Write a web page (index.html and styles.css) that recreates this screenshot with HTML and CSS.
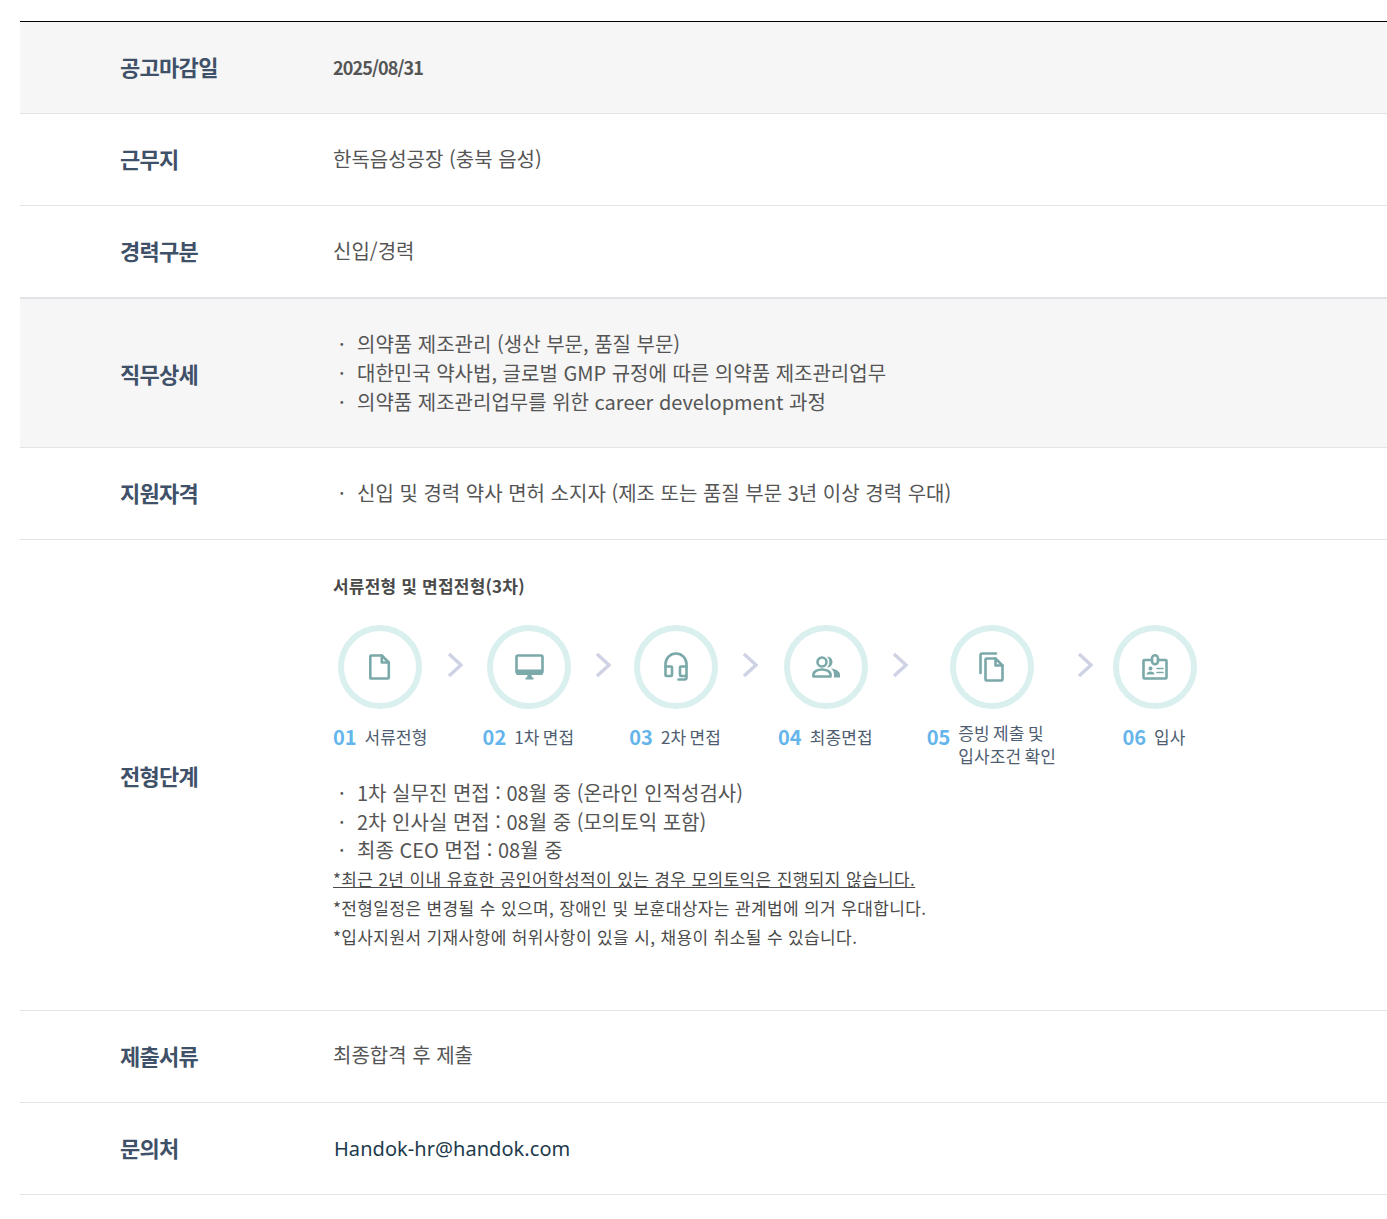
FILE: index.html
```html
<!DOCTYPE html>
<html lang="ko">
<head>
<meta charset="utf-8">
<title>채용 공고</title>
<link rel="stylesheet" href="styles.css">
</head>
<body>
<table class="job">
  <tr class="row shade"><th>공고마감일</th><td class="date">2025/08/31</td></tr>
  <tr class="row"><th>근무지</th><td>한독음성공장 (충북 음성)</td></tr>
  <tr class="row"><th>경력구분</th><td>신입/경력</td></tr>
  <tr class="row shade tall detail">
    <th>직무상세</th>
    <td>
      <ul class="dots">
        <li>의약품 제조관리 (생산 부문, 품질 부문)</li>
        <li>대한민국 약사법, 글로벌 GMP 규정에 따른 의약품 제조관리업무</li>
        <li>의약품 제조관리업무를 위한 career development 과정</li>
      </ul>
    </td>
  </tr>
  <tr class="row"><th>지원자격</th><td><ul class="dots"><li>신입 및 경력 약사 면허 소지자 (제조 또는 품질 부문 3년 이상 경력 우대)</li></ul></td></tr>
  <tr class="row tall">
    <th>전형단계</th>
    <td class="process">
      <h3 class="proc-title">서류전형 및 면접전형(3차)</h3>
      <div class="steps">
        <div class="step first">
          <div class="ring"><svg width="22" height="26" viewBox="0 0 22 26" class="ico"><path d="M2.300 1.500h10.500l7 7v15a1 1 0 0 1-1 1H2.300a1 1 0 0 1-1-1v-21a1 1 0 0 1 1-1z"/><path d="M12.800 1.500v7h7"/></svg></div>
          <div class="cap"><b>01</b><span>서류전형</span></div>
        </div>
        <svg class="arrow a1" width="16" height="26" viewBox="0 0 16 26"><path d="M2 2l12 11L2 24"/></svg>
        <div class="step">
          <div class="ring"><svg width="29" height="26" viewBox="0 0 29 26" class="ico"><rect x="1.500" y="1.500" width="26" height="17.500" rx="1.500"/><path class="fill" d="M1 15.500h27v4a1.500 1.500 0 0 1-1.500 1.500h-24A1.500 1.500 0 0 1 1 19.500zM12.500 21h4l.5 2.500h1.500v2h-8v-2H12z"/></svg></div>
          <div class="cap"><b>02</b><span>1차 면접</span></div>
        </div>
        <svg class="arrow a2" width="16" height="26" viewBox="0 0 16 26"><path d="M2 2l12 11L2 24"/></svg>
        <div class="step">
          <div class="ring"><svg width="26" height="30" viewBox="0 0 26 30" class="ico"><path d="M2.500 15v-3a10.500 10.500 0 0 1 21 0v3"/><rect x="2.500" y="14.500" width="6.500" height="9.500" rx="1"/><rect x="17" y="14.500" width="6.500" height="9.500" rx="1"/><path d="M23.500 24v1.500a2 2 0 0 1-2 2H15.500"/></svg></div>
          <div class="cap"><b>03</b><span>2차 면접</span></div>
        </div>
        <svg class="arrow a3" width="16" height="26" viewBox="0 0 16 26"><path d="M2 2l12 11L2 24"/></svg>
        <div class="step">
          <div class="ring"><svg width="28" height="22" viewBox="0 0 28 22" class="ico"><circle cx="10" cy="6" r="4.500"/><path d="M1.500 20.500v-2c0-3 4-5 8.500-5s8.500 2 8.500 5v2z"/><path class="fill" d="M15 .5a5.500 5.500 0 0 1 0 11 7.500 7.500 0 0 0 0-11z"/><path class="fill" d="M19 12.500c5 .5 9 3 9 6v3h-6v-3c0-2-1-4.500-3-6z"/></svg></div>
          <div class="cap"><b>04</b><span>최종면접</span></div>
        </div>
        <svg class="arrow a4" width="16" height="26" viewBox="0 0 16 26"><path d="M2 2l12 11L2 24"/></svg>
        <div class="step">
          <div class="ring"><svg width="26" height="30" viewBox="0 0 26 30" class="ico"><path d="M17 1.500H3a1.500 1.500 0 0 0-1.500 1.500v18"/><path d="M7.500 6.500h9l7 7v14a1 1 0 0 1-1 1h-15a1 1 0 0 1-1-1v-20a1 1 0 0 1 1-1z"/><path d="M16.500 6.500v7h7"/></svg></div>
          <div class="cap two"><b>05</b><span>증빙 제출 및<br>입사조건 확인</span></div>
        </div>
        <svg class="arrow a5" width="16" height="26" viewBox="0 0 16 26"><path d="M2 2l12 11L2 24"/></svg>
        <div class="step">
          <div class="ring"><svg width="26" height="26" viewBox="0 0 26 26" class="ico"><path d="M10 6H2.500a1 1 0 0 0-1 1v16.500a1 1 0 0 0 1 1h21a1 1 0 0 0 1-1V7a1 1 0 0 0-1-1H16"/><rect x="10" y="1.300" width="6" height="9" rx="3"/><circle class="fill" cx="8.500" cy="14.500" r="2"/><path class="fill" d="M4.500 20.500c0-2 2-3 4-3s4 1 4 3z"/><path class="thin" d="M15 14.500h6M15 18.500h6"/></svg></div>
          <div class="cap"><b>06</b><span>입사</span></div>
        </div>
      </div>
      <ul class="dots">
        <li>1차 실무진 면접 : 08월 중 (온라인 인적성검사)</li>
        <li>2차 인사실 면접 : 08월 중 (모의토익 포함)</li>
        <li>최종 CEO 면접 : 08월 중</li>
      </ul>
      <p class="note under">*최근 2년 이내 유효한 공인어학성적이 있는 경우 모의토익은 진행되지 않습니다.</p>
      <p class="note">*전형일정은 변경될 수 있으며, 장애인 및 보훈대상자는 관계법에 의거 우대합니다.</p>
      <p class="note">*입사지원서 기재사항에 허위사항이 있을 시, 채용이 취소될 수 있습니다.</p>
    </td>
  </tr>
  <tr class="row"><th>제출서류</th><td>최종합격 후 제출</td></tr>
  <tr class="row"><th>문의처</th><td class="mail">Handok-hr@handok.com</td></tr>
</table>
</body>
</html>
```

FILE: styles.css
```css
* { box-sizing: border-box; }
html, body { margin: 0; background: #fff; overflow-x: hidden; }
body {
  padding: 21px 0 24px 20px;
  font-family: "Noto Sans CJK KR", "Noto Sans", sans-serif;
  color: #555;
}
.job {
  width: 100%;
  border-collapse: separate;
  border-spacing: 0;
  border-top: 1px solid #000;
}
.row th, .row td {
  border-bottom: 1px solid #e4e4e4;
  height: 92px;
  vertical-align: middle;
  padding: 0 0 1px;
}
.shade th, .shade td { background: #f6f6f6; }
.row th {
  width: 313px;
  padding: 0 0 3px 100px;
  text-align: left;
  font-size: 22px;
  font-weight: 700;
  letter-spacing: -0.7px;
  color: #3f5168;
}
.tall th { padding-bottom: 0; }
.row.tall td { height: 150px; padding: 1px 0 0; }
.detail th, .detail td { border-top: 1px solid #dde1ea; }
.row td {
  font-size: 20px;
  line-height: 28.8px;
  font-weight: 400;
}
.row td.date { font-size: 18px; font-weight: 700; letter-spacing: -0.9px; padding-bottom: 0; }
.row td.mail { font-family: "Noto Sans", sans-serif; font-size: 20px; letter-spacing: 0.05px; color: #1d3a4c; padding: 2px 0 0 1px; }
.dots { list-style: none; margin: 0; padding: 0; }
.dots li { display: flex; }
.dots li::before { content: "·"; flex: 0 0 24px; text-indent: 6px; }
.row.tall td.process { padding: 32px 0 58px; }
.proc-title {
  margin: 0 0 24px;
  font-size: 17px;
  line-height: 28.8px;
  font-weight: 700;
  letter-spacing: 0.2px;
  color: #4a4a4a;
}
.steps { display: flex; align-items: flex-start; margin-bottom: 12px; }
.step { display: flex; flex-direction: column; align-items: center; }
.ring {
  width: 84px;
  height: 84px;
  margin-left: 2px;
  border: 6px solid #daf0ee;
  border-radius: 50%;
  display: flex;
  align-items: center;
  justify-content: center;
  background: #fff;
}
.first .ring { margin-left: 0; }
.ico { fill: none; stroke: #7ba8a8; stroke-width: 2.6; stroke-linejoin: round; stroke-linecap: round; }
.ico .fill { fill: #7ba8a8; stroke: none; }
.ico .thin { stroke-width: 1.6; }
.arrow {
  flex: none;
  margin-top: 27px;
  fill: none;
  stroke: #ced2e4;
  stroke-width: 3.4;
}
.a1 { margin-left: 19px; margin-right: 20px; }
.a2 { margin-left: 21px; margin-right: 18px; }
.a3 { margin-left: 21px; margin-right: 20px; }
.a4 { margin-left: 19px; margin-right: 19px; }
.a5 { margin-left: 21px; margin-right: 18px; }
.cap { display: flex; align-items: center; margin-top: 13px; }
.cap b { font-size: 20px; line-height: 29px; font-weight: 700; color: #64b5ec; margin-right: 8px; }
.cap span { font-size: 17px; line-height: 29px; letter-spacing: 0.1px; word-spacing: -1.5px; color: #4f5d70; }
.cap.two { align-items: flex-start; }
.cap.two span { line-height: 23px; margin-top: -1px; }
.note { margin: 0; font-size: 17px; line-height: 28.8px; letter-spacing: 0.38px; color: #4a4a4a; }
.under { text-decoration: underline; }
```
